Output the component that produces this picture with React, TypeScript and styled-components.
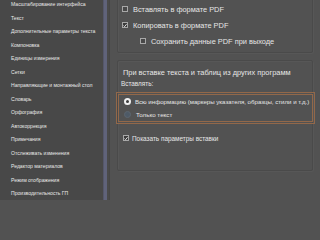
import React from 'react';
import styled, { createGlobalStyle } from 'styled-components';

const GlobalStyle = createGlobalStyle`
  html, body {
    margin: 0;
    padding: 0;
    background: #525252;
  }
  body {
    font-family: "Liberation Sans", Arial, sans-serif;
  }
`;

const Window = styled.div`
  width: 320px;
  height: 200px;
  display: flex;
  overflow: hidden;
  background: #525252;
`;

const Sidebar = styled.ul`
  width: 103px;
  flex: none;
  margin: 0;
  padding: 0;
  list-style: none;
  background: #484848;
  overflow: hidden;
`;

const SideItem = styled.li`
  height: 13.5px;
  line-height: 13.5px;
  padding-left: 11px;
  font-size: 5.1px;
  color: #e8e8e8;
  white-space: nowrap;
  &:first-child {
    margin-top: -2px;
  }
`;

const Scroll = styled.div`
  width: 4px;
  flex: none;
  background: #60637a;
  border-left: 1px solid #55576a;
  box-sizing: border-box;
`;

const Divider = styled.div`
  width: 3px;
  flex: none;
  background: #4a4a4a;
  border-right: 1px solid #464646;
  box-sizing: border-box;
`;

const Panel = styled.div`
  flex: 1;
  padding: 0 7px 0 7px;
  display: flex;
  flex-direction: column;
`;

const Group = styled.div<{ $top: number; $height: number }>`
  margin-top: ${(p) => p.$top}px;
  height: ${(p) => p.$height}px;
  box-sizing: border-box;
  border: 1px solid #4a4a4a;
  box-shadow: 1px 1px 0 #575757, inset 1px 1px 0 #575757;
  border-radius: 2px;
  padding: 0 0 0 4px;
  display: flex;
  flex-direction: column;
`;

const Spacer = styled.div<{ $h: number }>`
  height: ${(p) => p.$h}px;
  flex: none;
`;

const Row = styled.div<{ $h?: number; $indent?: number; $size?: number; $gap?: number }>`
  height: ${(p) => p.$h ?? 16}px;
  display: flex;
  align-items: center;
  gap: ${(p) => p.$gap ?? 5}px;
  padding-left: ${(p) => p.$indent ?? 0}px;
  font-size: ${(p) => p.$size ?? 7.4}px;
  color: #e6e6e6;
  white-space: nowrap;
`;

const Label = styled.div<{ $shift?: number; $size?: number }>`
  height: 11px;
  line-height: 11px;
  font-size: ${(p) => p.$size ?? 7.4}px;
  color: #e6e6e6;
  white-space: nowrap;
  margin-left: ${(p) => p.$shift ?? 0}px;
`;

const Box = styled.span<{ $checked?: boolean }>`
  width: 6px;
  height: 6px;
  flex: none;
  box-sizing: border-box;
  border: 1px solid #a8a8a8;
  background: ${(p) => (p.$checked ? '#3a3a3a' : '#484848')};
  display: inline-flex;
  align-items: center;
  justify-content: center;
`;

const Radio = styled.span<{ $on?: boolean }>`
  width: 7px;
  height: 7px;
  flex: none;
  box-sizing: border-box;
  border-radius: 50%;
  background: ${(p) => (p.$on ? '#3c3c3c' : '#4e5a66')};
  border: ${(p) => (p.$on ? '2px solid #f0f0f0' : '1px solid #5d6670')};
`;

const Highlight = styled.div`
  margin: 3px -3px 0 -6px;
  height: 32px;
  box-sizing: border-box;
  border: 3px double #92684a;
  padding-left: 5px;
  display: flex;
  flex-direction: column;
`;

const Check = () => (
  <svg width="5" height="5" viewBox="0 0 5 5">
    <path d="M0.6 2.6 L2 4 L4.4 0.9" fill="none" stroke="#f4f4f4" strokeWidth="1.1" />
  </svg>
);

const items = [
  'Масштабирование интерфейса',
  'Текст',
  'Дополнительные параметры текста',
  'Компоновка',
  'Единицы измерения',
  'Сетки',
  'Направляющие и монтажный стол',
  'Словарь',
  'Орфография',
  'Автокоррекция',
  'Примечания',
  'Отслеживать изменения',
  'Редактор материалов',
  'Режим отображения',
  'Производительность ГП',
];

export default function App() {
  return (
    <>
      <GlobalStyle />
      <Window>
        <Sidebar>
          {items.map((t) => (
            <SideItem key={t}>{t}</SideItem>
          ))}
        </Sidebar>
        <Scroll />
        <Divider />
        <Panel>
          <Group $top={-8} $height={61}>
            <Spacer $h={8} />
            <Row>
              <Box />
              Вставлять в формате PDF
            </Row>
            <Row>
              <Box $checked>
                <Check />
              </Box>
              Копировать в формате PDF
            </Row>
            <Row $indent={18}>
              <Box />
              Сохранить данные PDF при выходе
            </Row>
          </Group>
          <Group $top={7} $height={111}>
            <Spacer $h={6} />
            <Label $shift={1}>При вставке текста и таблиц из других программ</Label>
            <Label $shift={-1} $size={6.4}>
              Вставлять:
            </Label>
            <Highlight>
              <Row $size={6.1} $gap={4}>
                <Radio $on />
                Всю информацию (маркеры указателя, образцы, стили и т.д.)
              </Row>
              <Row $size={6.2}>
                <Radio />
                Только текст
              </Row>
            </Highlight>
            <Spacer $h={7} />
            <Row $h={14} $size={6.4} $gap={3} $indent={1}>
              <Box $checked>
                <Check />
              </Box>
              Показать параметры вставки
            </Row>
          </Group>
        </Panel>
      </Window>
    </>
  );
}
